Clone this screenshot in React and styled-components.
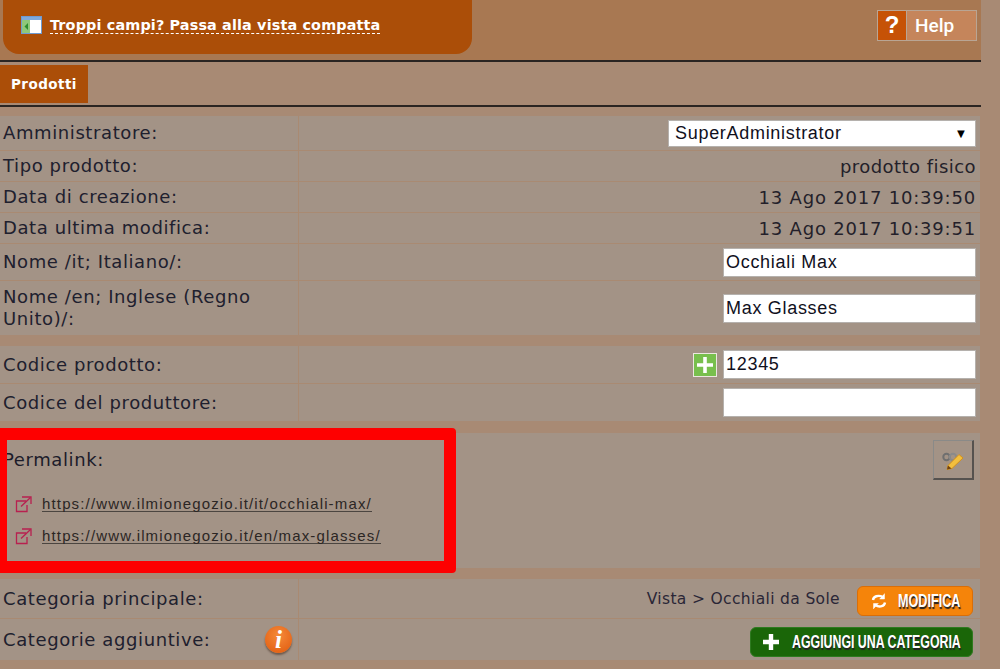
import React from "react";
import styled, { createGlobalStyle } from "styled-components";

const Global = createGlobalStyle`
  html, body { margin: 0; padding: 0; }
  body { background: #a88a74; width: 1000px; height: 669px; overflow: hidden; font-family: "DejaVu Sans", sans-serif; color: #1f1f2e; }
`;
const Page = styled.div`position: relative; width: 1000px; height: 669px; overflow: hidden;`;
const Header = styled.header`
  height: 60px; width: 981px; background: #a87852; display: flex; justify-content: space-between; align-items: flex-start; box-sizing: border-box; padding-left: 3px;
`;
const Notice = styled.div`
  width: 469px; height: 54px; background: #ab4e08; border-radius: 0 0 16px 16px; display: flex; align-items: center; box-sizing: border-box; padding: 0 0 4px 18px; gap: 8px;
`;
const NoticeLink = styled.a`
  font: bold 14.4px "DejaVu Sans", sans-serif; letter-spacing: 0.14px; color: #fff; border-bottom: 1px dashed #fff; line-height: 15px; position: relative; top: 1px;
`;
const HelpButton = styled.div`
  margin: 10px 4px 0 0; width: 100px; height: 31px; box-sizing: border-box; border: 1px solid #b9a594; display: flex; background: #c5855b; color: #fff; font: 500 19px Roboto, sans-serif;
`;
const HelpMark = styled.span`
  width: 28px; background: #c65206; border-right: 1px solid #b9a594; text-align: center; font: bold 24px/28px "Liberation Sans", sans-serif;
`;
const HelpLabel = styled.span`padding-left: 8px; line-height: 29px;`;
const Tabs = styled.nav`
  width: 981px; height: 47px; box-sizing: border-box; border-top: 2px solid #2a2522; border-bottom: 2px solid #2a2522; padding-top: 3px;
`;
const Tab = styled.div`
  width: 88px; height: 38px; background: #ab4e08; color: #fff; font: bold 13.5px/38px "DejaVu Sans", sans-serif; letter-spacing: 0.45px; box-sizing: border-box; padding-left: 11px;
`;
const Table = styled.main`width: 980px; padding-top: 9px; display: flex; flex-direction: column;`;
const Group = styled.section`display: flex; flex-direction: column; margin-bottom: ${p => p.$gap || 0}px;`;
const Row = styled.div`
  display: grid; grid-template-columns: 299px 1fr; height: ${p => p.$h}px; box-sizing: border-box; background: #a39386; border-bottom: 1px solid #a98a72;
  &:last-child { border-bottom: 0; }
`;
const Label = styled.div`
  font-size: 18px; line-height: 22px; letter-spacing: 0.6px; padding: 0 4px 0 3px; border-right: 1px solid #a98a72; display: flex; align-items: center; justify-content: space-between; color: #20202e;
`;
const Value = styled.div`
  display: flex; align-items: center; justify-content: flex-end; gap: 8px; padding-right: ${p => p.$pr ?? 4}px; font-size: 18px; letter-spacing: ${p => p.$sp ?? 0.8}px; color: #241f2a;
`;
const TextBox = styled.div`
  width: 253px; height: 29px; box-sizing: border-box; background: #fff; border: 1px solid #b5b1ad; padding-left: 2px; font: 18px/27px "Liberation Sans", sans-serif; letter-spacing: 0.7px; color: #10101c;
`;
const SelectBox = styled(TextBox)`
  width: 308px; height: 27px; display: flex; justify-content: space-between; padding: 0 7px 0 6px; line-height: 25px;
`;
const Arrow = styled.span`font-size: 13px; color: #000;`;
const AddIcon = styled.span`
  width: 24px; height: 24px; box-sizing: border-box; border: 1px solid #ece7e0; background: #78bf4d; display: flex; align-items: center; justify-content: center; margin-right: -2px;
`;
const PermaRow = styled.div`
  position: relative; height: 135px; width: 980px; background: #a39386; box-sizing: border-box; padding: 15px 0 0 3px; font-size: 18px; letter-spacing: 0.6px;
`;
const PermaLabel = styled.div`line-height: 24px; margin-bottom: 16px; color: #1c1c2a;`;
const LinkLine = styled.div`display: flex; align-items: center; gap: 10px; height: 32px; padding-left: 12px;`;
const Url = styled.a`
  font: 15px/15px "Liberation Sans", sans-serif; letter-spacing: 1.15px; color: #2b2624; border-bottom: 1px solid #4b4540;
`;
const EditBtn = styled.div`
  position: absolute; right: 6px; top: 7px; width: 41px; height: 40px; box-sizing: border-box; border: 1px solid #8a8a88; border-right: 2px solid #55524f; border-bottom: 2px solid #55524f; display: flex; align-items: center; justify-content: center;
`;
const Path = styled.span`font-size: 15.5px; letter-spacing: 0.35px; margin-right: 9px; color: #2a2636;`;
const Pill = styled.div`
  height: ${p => p.$h}px; width: ${p => p.$w}px; margin-top: 4px; box-sizing: border-box; border-radius: 6px; background: ${p => p.$bg}; border: 1px solid ${p => p.$bd}; display: flex; align-items: center; color: #fff; padding-left: ${p => p.$pl}px; gap: ${p => p.$g}px;
  svg { flex: none; }
`;
const PillText = styled.span`
  display: inline-block; font: bold 19px/1 "Liberation Sans", sans-serif; letter-spacing: 0; transform: scaleX(${p => p.$sx}); transform-origin: left center; white-space: nowrap; text-shadow: 1px 2px 1px #222;
`;
const InfoBadge = styled.span`
  flex: none; width: 27px; height: 27px; border-radius: 50%; background: radial-gradient(circle at 50% 35%, #f58a3a, #e0590c); color: #fff; font: italic bold 25px/27px "Liberation Serif", serif; letter-spacing: 0; text-align: center; margin-right: 2px; box-shadow: 0 2px 2px #6e5a4c;
`;
const Highlight = styled.div`
  position: absolute; left: -5px; top: 428px; width: 461px; height: 145px; box-sizing: border-box; border: 12px solid #fe0000; border-radius: 4px; pointer-events: none;
`;

const ExtIcon = () => (
  <svg width="17" height="17" viewBox="0 0 17 17" fill="none" stroke="#b8204f" strokeWidth="1.3">
    <path d="M11 5H1.5V15.5H12V9" />
    <path d="M7 1H16V8" />
    <path d="M15.5 1.5L6 10.5" />
  </svg>
);

export default function App() {
  return (
    <Page>
      <Global />
      <Header>
        <Notice>
          <svg width="21" height="18" viewBox="0 0 21 18">
            <rect x="0.5" y="0.5" width="20" height="17" fill="#fff" stroke="#6f9ad0" />
            <rect x="1" y="1" width="19" height="3" fill="#7ea9dc" />
            <rect x="1" y="4" width="8" height="13" fill="#8fc77a" />
            <path d="M7 7L3.5 10.5L7 14Z" fill="#2f8d2f" />
          </svg>
          <NoticeLink>Troppi campi? Passa alla vista compatta</NoticeLink>
        </Notice>
        <HelpButton>
          <HelpMark>?</HelpMark>
          <HelpLabel>Help</HelpLabel>
        </HelpButton>
      </Header>
      <Tabs><Tab>Prodotti</Tab></Tabs>
      <Table>
        <Group $gap={11}>
          <Row $h={35}><Label>Amministratore:</Label><Value><SelectBox>SuperAdministrator<Arrow>▼</Arrow></SelectBox></Value></Row>
          <Row $h={31}><Label>Tipo prodotto:</Label><Value $sp={0.45}>prodotto fisico</Value></Row>
          <Row $h={31}><Label>Data di creazione:</Label><Value>13 Ago 2017 10:39:50</Value></Row>
          <Row $h={31}><Label>Data ultima modifica:</Label><Value>13 Ago 2017 10:39:51</Value></Row>
          <Row $h={37}><Label>Nome /it; Italiano/:</Label><Value><TextBox>Occhiali Max</TextBox></Value></Row>
          <Row $h={54}><Label>Nome /en; Inglese (Regno Unito)/:</Label><Value><TextBox>Max Glasses</TextBox></Value></Row>
        </Group>
        <Group $gap={12}>
          <Row $h={38}>
            <Label>Codice prodotto:</Label>
            <Value>
              <AddIcon><svg width="18" height="18" viewBox="0 0 18 18"><path d="M9 1V17M1 9H17" stroke="#fff" strokeWidth="3.6" /></svg></AddIcon>
              <TextBox>12345</TextBox>
            </Value>
          </Row>
          <Row $h={37}><Label>Codice del produttore:</Label><Value><TextBox /></Value></Row>
        </Group>
        <Group $gap={11}>
          <PermaRow>
            <PermaLabel>Permalink:</PermaLabel>
            <LinkLine><ExtIcon /><Url>https://www.ilmionegozio.it/it/occhiali-max/</Url></LinkLine>
            <LinkLine><ExtIcon /><Url>https://www.ilmionegozio.it/en/max-glasses/</Url></LinkLine>
            <EditBtn>
              <svg width="24" height="20" viewBox="0 0 24 20" fill="none">
                <circle cx="5.5" cy="7" r="3.2" stroke="#6f6f6f" strokeWidth="2" />
                <circle cx="12" cy="7" r="3.2" stroke="#8a8a8a" strokeWidth="2" />
                <path d="M7 15.5L18 4.5L22 8L11 18.5L6 19.5Z" fill="#f3bf3e" stroke="#d1901f" strokeWidth="1" />
                <path d="M7 15.5L6 19.5L10.5 18.5Z" fill="#6f4216" />
              </svg>
            </EditBtn>
          </PermaRow>
        </Group>
        <Group>
          <Row $h={40}>
            <Label>Categoria principale:</Label>
            <Value $pr={7}>
              <Path>Vista &gt; Occhiali da Sole</Path>
              <Pill $w={116} $h={30} $bg="#f5840a" $bd="#d96e08" $pl={12} $g={10}>
                <svg width="18" height="18" viewBox="0 0 18 18" fill="none" stroke="#fff" strokeWidth="2.4">
                  <path d="M3 8C3.5 4.5 8 2.5 13 5" /><path d="M14.5 1.5V7H9.5" fill="#fff" strokeWidth="0.5" />
                  <path d="M15 10.5C14.5 14 10 16 5 13" /><path d="M3.5 17V11.5H8.5" fill="#fff" strokeWidth="0.5" />
                </svg>
                <PillText $sx={0.665}>MODIFICA</PillText>
              </Pill>
            </Value>
          </Row>
          <Row $h={41}>
            <Label>Categorie aggiuntive:<InfoBadge>i</InfoBadge></Label>
            <Value $pr={7}>
              <Pill $w={223} $h={30} $bg="#1a6608" $bd="#2e7a20" $pl={10} $g={11}>
                <svg width="20" height="20" viewBox="0 0 20 20"><path d="M10 2V18M2 10H18" stroke="#fff" strokeWidth="4.4" /></svg>
                <PillText $sx={0.65}>AGGIUNGI UNA CATEGORIA</PillText>
              </Pill>
            </Value>
          </Row>
        </Group>
      </Table>
      <Highlight />
    </Page>
  );
}
